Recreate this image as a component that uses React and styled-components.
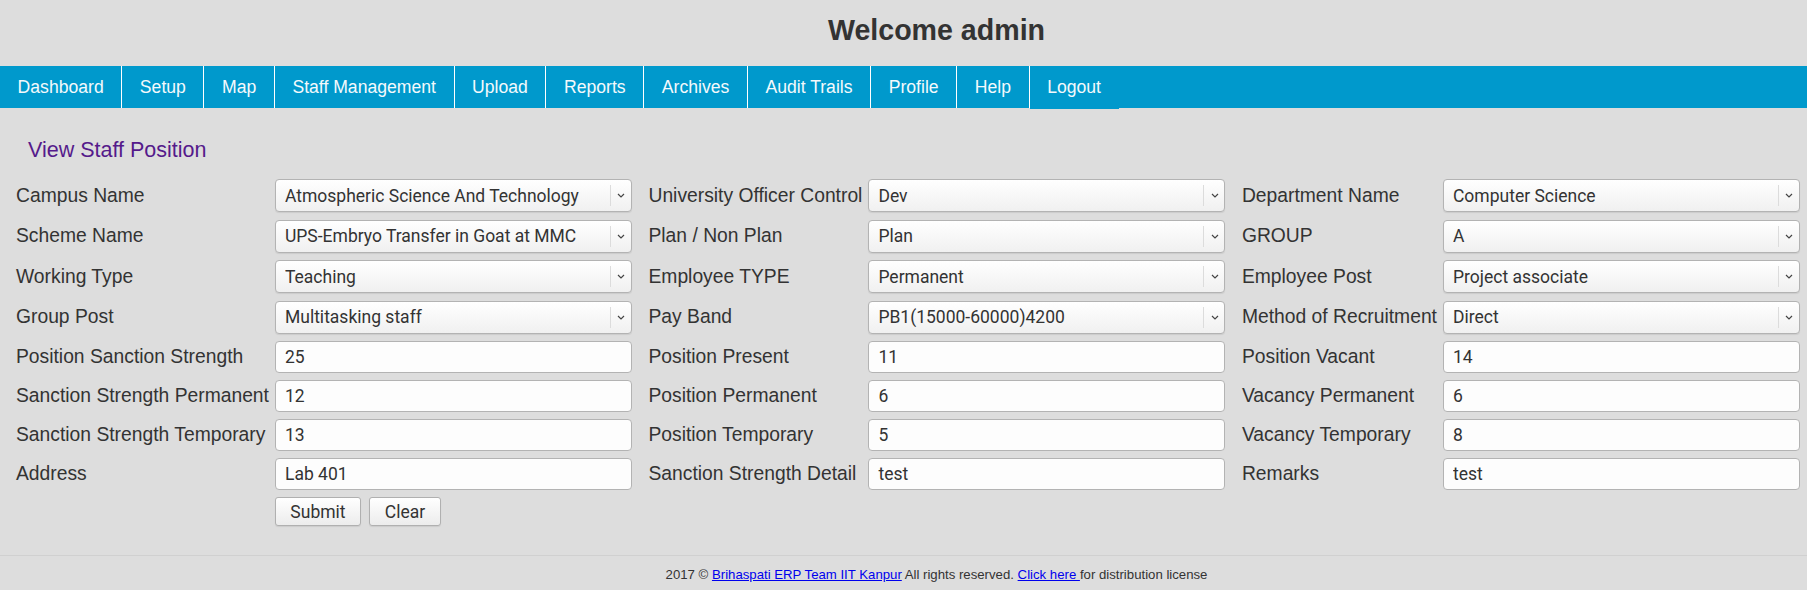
import styled, { createGlobalStyle } from "styled-components";

const GlobalStyle = createGlobalStyle`
  html, body {
    margin: 0;
    padding: 0;
    background: #dddddd;
    font-family: "Liberation Sans", Arial, sans-serif;
    color: #333;
    overflow: hidden;
  }
`;

const Page = styled.div`
  width: 1807px;
  min-height: 590px;
  display: flex;
  flex-direction: column;
`;

const Title = styled.h1`
  box-sizing: border-box;
  height: 66px;
  margin: 0;
  padding: 16px 0 0 66px;
  text-align: center;
  font-size: 28.6px;
  line-height: 28.6px;
  font-weight: bold;
  color: #333;
`;

const Nav = styled.ul`
  display: flex;
  margin: 0;
  padding: 0;
  list-style: none;
  height: 42px;
  background: #0099cc;
`;

const NavItem = styled.li`
  padding: 0 17.6px;
  border-right: ${(p) => (p.$last ? "none" : "1px solid #ffffff")};
  font-size: 17.6px;
  line-height: 42px;
  height: ${(p) => (p.$last ? "43px" : "42px")};
  background: #0099cc;
  color: #f4f9fc;
  white-space: nowrap;
`;

const Content = styled.div`
  padding: 30px 7px 0 16px;
`;

const Heading = styled.h3`
  margin: 0 0 17px 12px;
  font-size: 21.5px;
  line-height: 24px;
  font-weight: normal;
  color: #551a8b;
`;

const FormGrid = styled.div`
  display: grid;
  grid-template-columns: max-content 1fr max-content 1fr max-content 1fr;
  column-gap: 6px;
  row-gap: 7.5px;
  align-items: center;
`;

const Label = styled.label`
  font-size: 19.3px;
  color: #333;
  white-space: nowrap;
  margin-left: ${(p) => (p.$first ? "0" : "10.5px")};
`;

const SelectWrap = styled.div`
  position: relative;
  height: 33px;
`;

const Select = styled.select`
  appearance: none;
  box-sizing: border-box;
  width: 100%;
  height: 33px;
  padding: 0 28px 0 9px;
  border: 1px solid #b3b3b3;
  border-radius: 4px;
  background: linear-gradient(#ffffff, #f0f0f0);
  box-shadow: 0 1px 1px rgba(0, 0, 0, 0.08);
  font-family: Roboto, "Open Sans", sans-serif;
  font-size: 17.5px;
  color: #333;
  outline: none;
`;

const Arrow = styled.span`
  position: absolute;
  right: 0;
  top: 6px;
  bottom: 6px;
  width: 21px;
  border-left: 1px solid #dcdcdc;
  display: flex;
  align-items: center;
  justify-content: center;
  pointer-events: none;
`;

const Input = styled.input`
  box-sizing: border-box;
  width: 100%;
  height: 31.5px;
  padding: 0 9px;
  border: 1px solid #b3b3b3;
  border-radius: 4px;
  background: #fdfdfd;
  font-family: Roboto, "Open Sans", sans-serif;
  font-size: 17.5px;
  color: #333;
  outline: none;
`;

const Buttons = styled.div`
  grid-column: 2 / 3;
  display: flex;
  gap: 8px;
`;

const Button = styled.button`
  box-sizing: border-box;
  height: 29px;
  width: ${(p) => p.$w}px;
  padding: 0;
  border: 1px solid #b0b0b0;
  border-radius: 3px;
  background: linear-gradient(#ffffff, #ececec);
  box-shadow: 0 1px 1px rgba(0, 0, 0, 0.08);
  font-family: Roboto, "Open Sans", sans-serif;
  font-size: 17.5px;
  color: #333;
`;

const Footer = styled.footer`
  margin-top: 29px;
  border-top: 1px solid #d0d0d0;
  padding: 11px 0 0 66px;
  text-align: center;
  font-size: 13.2px;
  line-height: 15px;
  color: #333;

  a {
    color: #0000ee;
    text-decoration: underline;
  }
`;

const Chevron = () => (
  <svg width="8" height="5" viewBox="0 0 8 5">
    <path d="M1 1 L4 4 L7 1" fill="none" stroke="#444" strokeWidth="1.2" />
  </svg>
);

const navItems = [
  "Dashboard",
  "Setup",
  "Map",
  "Staff Management",
  "Upload",
  "Reports",
  "Archives",
  "Audit Trails",
  "Profile",
  "Help",
  "Logout",
];

// each row: three label/field pairs
const rows = [
  [
    ["Campus Name", "select", "Atmospheric Science And Technology"],
    ["University Officer Control", "select", "Dev"],
    ["Department Name", "select", "Computer Science"],
  ],
  [
    ["Scheme Name", "select", "UPS-Embryo Transfer in Goat at MMC"],
    ["Plan / Non Plan", "select", "Plan"],
    ["GROUP", "select", "A"],
  ],
  [
    ["Working Type", "select", "Teaching"],
    ["Employee TYPE", "select", "Permanent"],
    ["Employee Post", "select", "Project associate"],
  ],
  [
    ["Group Post", "select", "Multitasking staff"],
    ["Pay Band", "select", "PB1(15000-60000)4200"],
    ["Method of Recruitment", "select", "Direct"],
  ],
  [
    ["Position Sanction Strength", "input", "25"],
    ["Position Present", "input", "11"],
    ["Position Vacant", "input", "14"],
  ],
  [
    ["Sanction Strength Permanent", "input", "12"],
    ["Position Permanent", "input", "6"],
    ["Vacancy Permanent", "input", "6"],
  ],
  [
    ["Sanction Strength Temporary", "input", "13"],
    ["Position Temporary", "input", "5"],
    ["Vacancy Temporary", "input", "8"],
  ],
  [
    ["Address", "input", "Lab 401"],
    ["Sanction Strength Detail", "input", "test"],
    ["Remarks", "input", "test"],
  ],
];

function Field({ kind, value }) {
  if (kind === "select") {
    return (
      <SelectWrap>
        <Select defaultValue={value}>
          <option>{value}</option>
        </Select>
        <Arrow>
          <Chevron />
        </Arrow>
      </SelectWrap>
    );
  }
  return <Input type="text" defaultValue={value} />;
}

export default function App() {
  return (
    <Page>
      <GlobalStyle />
      <Title>Welcome admin</Title>
      <Nav>
        {navItems.map((item, i) => (
          <NavItem key={item} $last={i === navItems.length - 1}>
            {item}
          </NavItem>
        ))}
      </Nav>
      <Content>
        <Heading>View Staff Position</Heading>
        <FormGrid>
          {rows.map((row) =>
            row.map(([label, kind, value], i) => [
              <Label key={label + "-l"} $first={i === 0}>
                {label}
              </Label>,
              <Field key={label + "-f"} kind={kind} value={value} />,
            ])
          )}
          <Buttons>
            <Button $w={86}>Submit</Button>
            <Button $w={72}>Clear</Button>
          </Buttons>
        </FormGrid>
      </Content>
      <Footer>
        2017 © <a href="#">Brihaspati ERP Team IIT Kanpur</a> All rights
        reserved. <a href="#">Click here </a>for distribution license
      </Footer>
    </Page>
  );
}
